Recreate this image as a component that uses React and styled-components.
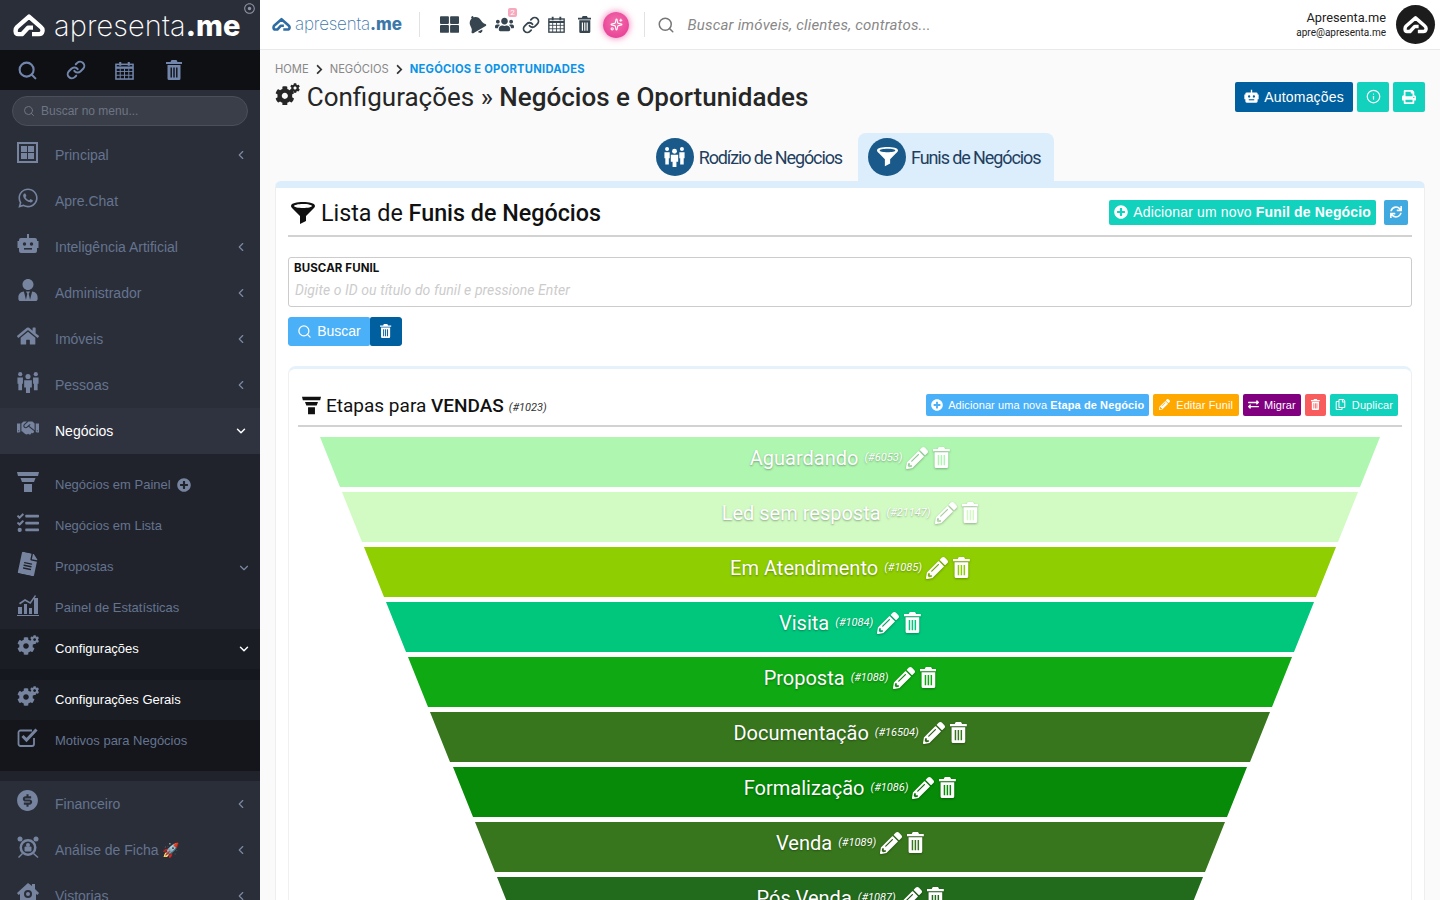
import React from 'react';
import styled, { createGlobalStyle } from 'styled-components';
import {
  FaWhatsapp, FaUserTie, FaHome, FaHandshake, FaPlusCircle, FaTasks, FaCog,
  FaBell, FaUsers, FaThLarge, FaChevronRight, FaPencilAlt, FaSync, FaExchangeAlt, FaRegCopy, FaPrint,
  FaRegDotCircle, FaFileAlt,
} from 'react-icons/fa';
import { RiMoneyDollarCircleFill } from 'react-icons/ri';
import { Search, Info, Sparkles, Link as LinkIcon, ChevronLeft, ChevronDown } from 'lucide-react';

const GlobalStyle = createGlobalStyle`
  html, body { margin: 0; padding: 0; height: 100%; overflow: hidden; }
  body { font-family: Roboto, "Liberation Sans", sans-serif; background: #fafafa; }
  * { box-sizing: border-box; }
`;

const Shell = styled.div`
  display: flex;
  width: 1440px;
  height: 900px;
  overflow: hidden;
`;

/* sidebar */
const Sidebar = styled.aside`
  width: 260px;
  flex: none;
  height: 900px;
  overflow: hidden;
  background: #2a2e39;
  font-family: "Liberation Sans", Arial, sans-serif;
`;

const SideLogo = styled.div`
  height: 50px;
  display: flex;
  align-items: center;
  padding: 0 0 0 13px;
  color: #fff;
  position: relative;
`;

const LogoText = styled.span`
  font-family: Inter, sans-serif;
  font-size: ${p => p.$size}px;
  font-weight: 200;
  letter-spacing: ${p => p.$spacing}px;
  color: ${p => p.$color};
  margin-left: ${p => p.$gap}px;
  line-height: 1;
  b { font-weight: 800; letter-spacing: 0; }
`;

const LogoDot = styled.span`
  position: absolute;
  top: 3px;
  right: 5px;
  font-size: 11px;
  color: #8d94a5;
  display: flex;
`;

const SideTools = styled.div`
  height: 40px;
  background: #0e1013;
  display: flex;
  align-items: center;
  padding-left: 17px;
  gap: 28px;
  color: #7286ad;
  svg { display: block; }
  svg:nth-child(3) { margin-left: 1px; }
  svg:last-child { margin-left: 4px; }
`;

const SideSearch = styled.div`
  margin: 6px 12px 6px;
  height: 30px;
  border-radius: 15px;
  border: 1px solid #4a4f5b;
  background: #3a3e49;
  display: flex;
  align-items: center;
  gap: 6px;
  padding-left: 10px;
  font-size: 12px;
  color: #6e7584;
`;

const MenuRow = styled.div`
  height: ${p => p.$h}px;
  display: flex;
  align-items: center;
  padding: 0 12px ${p => (p.$sub ? 2 : 0)}px 17px;
  font-size: ${p => (p.$sub ? 13 : 14)}px;
  color: ${p => (p.$on ? '#fff' : '#65748f')};
  background: ${p => p.$bg || 'transparent'};
`;

const MenuIcon = styled.span`
  width: 38px;
  flex: none;
  display: flex;
  font-size: 22px;
  color: #76849f;
  margin-top: -6px;
`;

const MenuLabel = styled.span`
  flex: 1;
  display: flex;
  align-items: center;
  gap: 6px;
`;

const Caret = styled.span`
  display: flex;
  color: ${p => (p.$on ? '#fff' : '#7c89a3')};
  margin-right: ${p => (p.$sub ? -3 : 0)}px;
  margin-top: ${p => (p.$sub ? 2 : 0)}px;
`;

const SubMenu = styled.div`
  background: #20232c;
  padding-top: 11px;
  padding-bottom: 10px;
`;

const Gap = styled.div`
  height: 11px;
  background: #16181f;
`;

/* top bar */
const Main = styled.main`
  flex: 1;
  min-width: 0;
  display: flex;
  flex-direction: column;
`;

const TopBar = styled.header`
  height: 50px;
  flex: none;
  background: #fff;
  border-bottom: 1px solid #e9e9e9;
  display: flex;
  align-items: center;
  padding: 0 5px 0 12px;
`;

const Divider = styled.span`
  width: 1px;
  height: 25px;
  background: #e2e2e2;
  margin: ${p => p.$m};
`;

const TopIcons = styled.div`
  display: flex;
  align-items: center;
  gap: 8px;
  font-size: 17px;
  color: #36454f;
  svg { display: block; }
`;

const TopIcon = styled.span`
  position: relative;
  display: flex;
  margin-left: ${p => p.$ml || 0}px;
  transform: ${p => (p.$rotate ? `rotate(${p.$rotate}deg)` : 'none')};
`;

const Badge = styled.span`
  position: absolute;
  top: -7px;
  right: -3px;
  width: 9px;
  height: 9px;
  background: #f7a8bd;
  color: #fff;
  font-size: 8px;
  line-height: 9px;
  text-align: center;
  border-radius: 2px;
`;

const Spark = styled.span`
  width: 26px;
  height: 26px;
  border-radius: 50%;
  margin-left: 4px;
  background: radial-gradient(circle at 50% 40%, #f46fae, #e5358f);
  box-shadow: 0 0 6px 1px rgba(236, 64, 150, 0.55);
  display: flex;
  align-items: center;
  justify-content: center;
  color: #fff;
`;

const TopSearch = styled.div`
  flex: 1;
  display: flex;
  align-items: center;
  gap: 12px;
  font-size: 15px;
  font-style: italic;
  letter-spacing: 0.2px;
  color: #888;
`;

const User = styled.div`
  text-align: right;
  margin-right: 10px;
  color: #222;
  font-size: 12.800px;
  line-height: 15px;
  small { display: block; font-size: 10px; line-height: 15px; }
`;

const Avatar = styled.span`
  width: 39px;
  height: 39px;
  border-radius: 50%;
  background: #1c1c1c;
  display: flex;
  align-items: center;
  justify-content: center;
`;

/* page head */
const Page = styled.div`
  flex: 1;
  padding: 0 15px;
  overflow: hidden;
`;

const Crumbs = styled.div`
  display: flex;
  align-items: center;
  gap: 5px;
  height: 38px;
  font-family: Inter, sans-serif;
  font-size: 11.200px;
  color: #888;
  span { color: #0b93e6; font-weight: 700; letter-spacing: 0.25px; }
  svg { color: #333; font-size: 11px; }
`;

const TitleRow = styled.div`
  display: flex;
  justify-content: space-between;
  align-items: flex-start;
  height: 45px;
  margin-top: -6px;
`;

const Title = styled.h1`
  margin: 0;
  font-size: 26px;
  font-weight: 400;
  line-height: 30px;
  color: #262626;
  display: flex;
  align-items: center;
  gap: 7px;
  b { font-weight: 500; }
  > span:first-child { display: flex; font-size: 24px; margin-top: -6px; }
`;

const HeadActions = styled.div`
  display: flex;
  gap: 4px;
`;

const Button = styled.span`
  height: ${p => p.$h || 30}px;
  padding: 0 ${p => p.$px ?? 5}px 1px;
  min-width: ${p => p.$w || 0}px;
  border-radius: 2px;
  background: ${p => p.$bg};
  color: #fff;
  font-family: "Liberation Sans", Arial, sans-serif;
  font-size: ${p => p.$fs || 14}px;
  letter-spacing: ${p => p.$ls || 0}px;
  display: inline-flex;
  align-items: center;
  justify-content: center;
  gap: ${p => p.$gap || 5}px;
  white-space: nowrap;
  b { font-weight: 700; }
`;

const Tabs = styled.div`
  display: flex;
  justify-content: center;
  gap: 6px;
  height: 48px;
  margin-top: 6px;
`;

const Tab = styled.div`
  padding: 5px ${p => (p.$on ? 14 : 10)}px 5px 10px;
  display: flex;
  align-items: center;
  gap: 5px;
  border-radius: 8px 8px 0 0;
  background: ${p => (p.$on ? '#dcedfb' : 'transparent')};
  color: #1f3f5f;
  font-size: 18px;
  letter-spacing: -1.100px;
`;

const TabDisc = styled.span`
  width: 38px;
  height: 38px;
  border-radius: 50%;
  background: #1a5a8a;
  color: #fff;
  display: flex;
  align-items: center;
  justify-content: center;
  margin-top: -1px;
`;

const Panel = styled.section`
  background: #fff;
  border-top: 7px solid #dcedfb;
  border-left: 1px solid #eee;
  border-right: 1px solid #eee;
  border-radius: 6px 6px 0 0;
  padding: 0 12px;
  height: 720px;
`;

const PanelHead = styled.div`
  height: 49px;
  padding: 2px 4px 0 3px;
  display: flex;
  align-items: center;
  justify-content: space-between;
  border-bottom: 2px solid #d2d2d2;
`;

const PanelTitle = styled.h2`
  margin: 0;
  font-size: 23.300px;
  font-weight: 400;
  color: #111;
  display: flex;
  align-items: center;
  gap: 6px;
  b { font-weight: 500; }
`;

const Row = styled.div`
  display: flex;
  gap: ${p => p.$gap || 0}px;
  align-items: center;
`;

const Field = styled.div`
  margin-top: 20px;
  height: 50px;
  border: 1px solid #ccc;
  border-radius: 3px;
  padding: 4px 5px;
  label {
    display: block;
    font-family: Inter, sans-serif;
    font-weight: 700;
    font-size: 11.500px;
    letter-spacing: 0.1px;
    line-height: 13px;
    color: #111;
  }
  div {
    margin-top: 7px;
    padding-left: 1px;
    font-size: 14px;
    font-style: italic;
    color: #ccc;
    letter-spacing: 0.07px;
  }
`;

const SearchGroup = styled.div`
  display: flex;
  margin-top: 10px;
  height: 29px;
  width: 114px;
  border-radius: 3px;
  overflow: hidden;
`;

const Card = styled.div`
  margin-top: 20px;
  border-top: 3px solid #e6f2fb;
  border-left: 1px solid #f0f0f0;
  border-right: 1px solid #f0f0f0;
  border-radius: 8px 8px 0 0;
  padding: 0 9px;
`;

const CardHead = styled.div`
  height: 58px;
  padding: 16px 4px 0 4px;
  display: flex;
  align-items: center;
  justify-content: space-between;
  border-bottom: 2px solid #d2d2d2;
`;

const CardTitle = styled.h3`
  margin: 0;
  font-size: 19px;
  font-weight: 400;
  color: #111;
  display: flex;
  align-items: center;
  gap: 5px;
  b { font-weight: 500; }
  i { font-size: 11px; color: #333; margin-top: 5px; }
`;

const Funnel = styled.div`
  display: flex;
  flex-direction: column;
  gap: 5px;
  align-items: center;
  margin-top: 10px;
`;

const Stage = styled.div`
  height: 50px;
  width: ${p => p.$w}px;
  flex: none;
  background: ${p => p.$bg};
  clip-path: polygon(0 0, 100% 0, calc(100% - 20px) 100%, 20px 100%);
  color: #fff;
  font-size: 20px;
  text-shadow: 0 1px 2px rgba(0, 0, 0, 0.35);
  display: flex;
  justify-content: center;
  align-items: flex-start;
  gap: 5px;
  padding-top: 8px;
  line-height: 26px;
  i { font-size: 11px; margin: 0 -1px 0 1px; }
  svg { margin-top: 2px; filter: drop-shadow(0 1px 1px rgba(0, 0, 0, 0.3)); }
`;

const Gears = styled.span`
  display: inline-flex;
  align-items: flex-start;
  svg:first-child { font-size: 0.82em; margin-top: 0.16em; }
  svg:last-child { font-size: 0.42em; margin-left: -0.5em; }
`;

function GearPair() {
  return <Gears><FaCog /><FaCog /></Gears>;
}

function LogoMark({ size = 32, color = '#fff' }) {
  return (
    <svg width={size} height={size * 0.76} viewBox="0 0 32 24" fill="none" stroke={color} strokeWidth="4.4" strokeLinejoin="round">
      <path d="M19 21H26C30 21 30.500 16 28 14L16 3.500L4 14C2 16 2 21 5 21H9L15 14.500H20" />
    </svg>
  );
}

function PrincipalIcon() {
  return (
    <svg width="21" height="21" viewBox="0 0 21 21" fill="#76849f">
      <path fillRule="evenodd" d="M0 0h21v21H0zM2 2v17h17V2z" />
      <path d="M4 4h6v6H4zM11 4h6v6h-6zM4 11h6v6H4zM11 11h6v6h-6z" />
    </svg>
  );
}

function FunnelIcon({ size = 24, color = '#111' }) {
  return (
    <svg width={size} height={size} viewBox="0 0 24 24">
      <path fill={color} fillRule="evenodd" d="M12 1C6 1 0 2 0 5c0 1 1 2 2 3l7 7v8l6-3v-5l7-7c1-1 2-2 2-3 0-3-6-4-12-4zm0 2c5 0 9 1 9 2s-4 2-9 2-9-1-9-2 4-2 9-2z" />
    </svg>
  );
}

function StackedFunnel({ size = 22, color = '#76849f' }) {
  return (
    <svg width={size} height={size} viewBox="0 0 22 22" fill={color}>
      <path d="M0 1h22l-1 4H1zM3.500 7h15l-1.500 4H5zM7 13h8v8H7z" />
    </svg>
  );
}

function PeopleIcon({ size = 22, color = '#76849f' }) {
  return (
    <svg width={size} height={size} viewBox="0 0 24 24" fill={color}>
      <circle cx="3.500" cy="3.500" r="2.300" />
      <path d="M0.500 7h6v7h-1v7h-4v-7h-1z" />
      <circle cx="20.500" cy="3.500" r="2.300" />
      <path d="M17.500 7h6v7h-1v7h-4v-7h-1z" />
      <circle cx="12" cy="6" r="2.800" />
      <path d="M7.800 10h8.400v8h-2v6h-4.400v-6h-2z" />
    </svg>
  );
}

function RobotIcon({ size = 22, color = '#76849f', eye = '#2a2e39' }) {
  return (
    <svg width={size} height={size} viewBox="0 0 22 22">
      <path fill={color} d="M10 1h2v4h6a2 2 0 0 1 2 2v1h1.500v7H20v3a2 2 0 0 1-2 2H4a2 2 0 0 1-2-2v-3H.5V8H2V7a2 2 0 0 1 2-2h6z" />
      <circle cx="7.500" cy="11" r="1.700" fill={eye} />
      <circle cx="14.500" cy="11" r="1.700" fill={eye} />
      <rect x="7" y="15" width="8" height="1.600" fill={eye} />
    </svg>
  );
}

function TrashIcon({ size = 20, color = 'currentColor', cut = '#0e1013' }) {
  return (
    <svg width={size * 0.8} height={size} viewBox="0 0 16 20">
      <path fill={color} d="M5.500 0h5l1 2H16v2H0V2h4.500zM1.500 5h13v13.500a1.500 1.500 0 0 1-1.500 1.500H3a1.500 1.500 0 0 1-1.500-1.500z" />
      <path fill={cut} d="M4.500 7.500h1.400v10H4.500zM7.300 7.500h1.400v10H7.300zM10.100 7.500h1.400v10h-1.400z" />
    </svg>
  );
}

function CalendarIcon({ size = 20, color = 'currentColor' }) {
  return (
    <svg width={size} height={size} viewBox="0 0 20 20" fill="none" stroke={color}>
      <rect x="1" y="3.500" width="18" height="15.500" strokeWidth="1.600" />
      <path d="M1 7h18" strokeWidth="2.500" />
      <path d="M1 11h18M1 15h18M5.500 8v11M10 8v11M14.500 8v11" strokeWidth="1" />
      <path d="M5.500 1v4M14.500 1v4" strokeWidth="2.200" />
    </svg>
  );
}

function StatsIcon() {
  return (
    <svg width="22" height="22" viewBox="0 0 22 22" fill="#76849f">
      <path d="M0 21h22v1H0zM1 13h4v7H1zM7 10h3v10H7zM12 14h3v6h-3zM17 4h4v16h-4z" />
      <path d="M2 9l6-4 5 3 5-7 1 1-5.500 8L8 7l-5 3.500z" />
    </svg>
  );
}

function CheckIcon() {
  return (
    <svg width="21" height="21" viewBox="0 0 21 21" fill="none" stroke="#76849f">
      <path d="M17 11v6a2 2 0 0 1-2 2H3.500a2 2 0 0 1-2-2V5.500a2 2 0 0 1 2-2H15" strokeWidth="1.800" />
      <path d="M5.500 9l4 4L19.500 2.500" strokeWidth="3" />
    </svg>
  );
}

function AlarmLockIcon() {
  return (
    <svg width="22" height="22" viewBox="0 0 22 22" fill="#76849f">
      <circle cx="3" cy="3" r="2.500" />
      <circle cx="19" cy="3" r="2.500" />
      <path fillRule="evenodd" d="M11 3a8.500 8.500 0 1 1 0 17 8.500 8.500 0 0 1 0-17zm0 2.500a6 6 0 1 0 0 12 6 6 0 0 0 0-12z" />
      <circle cx="11" cy="9" r="2" />
      <rect x="7.500" y="10.500" width="7" height="5" rx="1" />
      <path d="M17 17l4.500 4-1 1-4.500-4zM5 17l-4 4 1 1 4-4z" />
    </svg>
  );
}

function HouseSearchIcon() {
  return (
    <svg width="22" height="22" viewBox="0 0 22 22" fill="#76849f">
      <path fillRule="evenodd" d="M11 1l4 3V2h3v5l4 4-1.500 2L19 12v9H3v-9l-1.500 1L0 11zm0 7a4 4 0 1 0 0 8 4 4 0 0 0 0-8zm0 2a2 2 0 1 1 0 4 2 2 0 0 1 0-4z" />
    </svg>
  );
}

const menuTop = [
  { label: 'Principal', icon: <PrincipalIcon />, caret: true },
  { label: 'Apre.Chat', icon: <FaWhatsapp /> },
  { label: 'Inteligência Artificial', icon: <RobotIcon />, caret: true },
  { label: 'Administrador', icon: <FaUserTie />, caret: true },
  { label: 'Imóveis', icon: <FaHome />, caret: true },
  { label: 'Pessoas', icon: <PeopleIcon />, caret: true },
];

const menuBottom = [
  { label: 'Financeiro', icon: <RiMoneyDollarCircleFill size={25} style={{ margin: '-2px 0 0 -2px' }} />, caret: true },
  { label: 'Análise de Ficha 🚀', icon: <AlarmLockIcon />, caret: true },
  { label: 'Vistorias', icon: <HouseSearchIcon />, caret: true },
];

const stages = [
  { name: 'Aguardando', id: 6053, w: 1060, bg: '#aff7b0' },
  { name: 'Led sem resposta', id: 21147, w: 1016, bg: '#d1fbc3' },
  { name: 'Em Atendimento', id: 1085, w: 972, bg: '#8fce00' },
  { name: 'Visita', id: 1084, w: 928, bg: '#00c77c' },
  { name: 'Proposta', id: 1088, w: 884, bg: '#0fa913' },
  { name: 'Documentação', id: 16504, w: 840, bg: '#38761d' },
  { name: 'Formalização', id: 1086, w: 794, bg: '#078a07' },
  { name: 'Venda', id: 1089, w: 750, bg: '#38761d' },
  { name: 'Pós Venda', id: 1087, w: 706, bg: '#226b1c' },
];

const TopMenuItem = ({ item }) => (
  <MenuRow $h={46}>
    <MenuIcon>{item.icon}</MenuIcon>
    <MenuLabel>{item.label}</MenuLabel>
    {item.caret && <Caret><ChevronLeft size={14} /></Caret>}
  </MenuRow>
);

export default function App() {
  return (
    <Shell>
      <GlobalStyle />
      <Sidebar>
        <SideLogo>
          <LogoMark />
          <LogoText $size={29} $spacing={0.1} $color="#fff" $gap={9}>apresenta<b>.me</b></LogoText>
          <LogoDot><FaRegDotCircle /></LogoDot>
        </SideLogo>
        <SideTools>
          <Search size={21} strokeWidth={2.4} />
          <LinkIcon size={20} strokeWidth={2.4} />
          <CalendarIcon size={19} />
          <TrashIcon size={20} />
        </SideTools>
        <SideSearch>
          <Search size={12} />
          Buscar no menu...
        </SideSearch>
        {menuTop.map(item => <TopMenuItem key={item.label} item={item} />)}
        <MenuRow $h={46} $on $bg="#2f333f">
          <MenuIcon><FaHandshake /></MenuIcon>
          <MenuLabel>Negócios</MenuLabel>
          <Caret $on><ChevronDown size={14} strokeWidth={2.5} /></Caret>
        </MenuRow>
        <SubMenu>
          <MenuRow $h={41} $sub>
            <MenuIcon><StackedFunnel /></MenuIcon>
            <MenuLabel>Negócios em Painel <FaPlusCircle size={14} color="#76849f" /></MenuLabel>
          </MenuRow>
          <MenuRow $h={41} $sub>
            <MenuIcon><FaTasks /></MenuIcon>
            <MenuLabel>Negócios em Lista</MenuLabel>
          </MenuRow>
          <MenuRow $h={41} $sub>
            <MenuIcon><FaFileAlt style={{ transform: 'rotate(12deg)' }} /></MenuIcon>
            <MenuLabel>Propostas</MenuLabel>
            <Caret $sub><ChevronDown size={14} /></Caret>
          </MenuRow>
          <MenuRow $h={41} $sub>
            <MenuIcon><StatsIcon /></MenuIcon>
            <MenuLabel>Painel de Estatísticas</MenuLabel>
          </MenuRow>
          <MenuRow $h={40} $sub $on $bg="#1a1d24">
            <MenuIcon><GearPair /></MenuIcon>
            <MenuLabel>Configurações</MenuLabel>
            <Caret $sub $on><ChevronDown size={14} strokeWidth={2.5} /></Caret>
          </MenuRow>
          <Gap />
          <MenuRow $h={40} $sub $on $bg="#1a1d24">
            <MenuIcon><GearPair /></MenuIcon>
            <MenuLabel>Configurações Gerais</MenuLabel>
          </MenuRow>
          <MenuRow $h={51} $sub $bg="#14161c" style={{ paddingBottom: 10 }}>
            <MenuIcon><CheckIcon /></MenuIcon>
            <MenuLabel>Motivos para Negócios</MenuLabel>
          </MenuRow>
        </SubMenu>
        {menuBottom.map(item => <TopMenuItem key={item.label} item={item} />)}
      </Sidebar>

      <Main>
        <TopBar>
          <LogoMark size={19} color="#2e6da4" />
          <LogoText $size={17} $spacing={-0.2} $color="#3d77aa" $gap={4}>apresenta<b>.me</b></LogoText>
          <Divider $m="0 20px 0 17px" />
          <TopIcons>
            <FaThLarge size={19} />
            <TopIcon $rotate={-30}><FaBell size={19} /></TopIcon>
            <TopIcon $ml={1}><FaUsers size={19} /><Badge>2</Badge></TopIcon>
            <LinkIcon size={18} strokeWidth={2.4} />
            <CalendarIcon size={17} />
            <TopIcon $ml={5}><TrashIcon size={17} cut="#fff" /></TopIcon>
            <Spark><Sparkles size={13} /></Spark>
          </TopIcons>
          <Divider $m="0 12px 0 15px" />
          <TopSearch>
            <Search size={18} color="#777" style={{ flex: 'none' }} />
            Buscar imóveis, clientes, contratos...
          </TopSearch>
          <User>
            Apresenta.me
            <small>apre@apresenta.me</small>
          </User>
          <Avatar><LogoMark size={25} /></Avatar>
        </TopBar>

        <Page>
          <Crumbs>
            HOME <FaChevronRight /> NEGÓCIOS <FaChevronRight /> <span>NEGÓCIOS E OPORTUNIDADES</span>
          </Crumbs>
          <TitleRow>
            <Title>
              <span><GearPair /></span>
              <span>Configurações » <b>Negócios e Oportunidades</b></span>
            </Title>
            <HeadActions>
              <Button $bg="#005f9e" $px={9} $ls={0.2}><RobotIcon size={15} color="#fff" eye="#005f9e" /> Automações</Button>
              <Button $bg="#12d1bd" $w={32}><Info size={15} /></Button>
              <Button $bg="#12d1bd" $w={32}><FaPrint size={14} /></Button>
            </HeadActions>
          </TitleRow>

          <Tabs>
            <Tab>
              <TabDisc><PeopleIcon size={21} color="#fff" /></TabDisc>
              Rodízio de Negócios
            </Tab>
            <Tab $on>
              <TabDisc><FunnelIcon size={21} color="#fff" /></TabDisc>
              Funis de Negócios
            </Tab>
          </Tabs>

          <Panel>
            <PanelHead>
              <PanelTitle>
                <FunnelIcon />
                <span>Lista de <b>Funis de Negócios</b></span>
              </PanelTitle>
              <Row $gap={8}>
                <Button $bg="#12d1bd" $h={25} $px={5} $ls={0.15}>
                  <FaPlusCircle size={14} />
                  <span>Adicionar um novo <b>Funil de Negócio</b></span>
                </Button>
                <Button $bg="#3fa9e0" $h={25} $w={24}><FaSync size={12} /></Button>
              </Row>
            </PanelHead>
            <Field>
              <label>BUSCAR FUNIL</label>
              <div>Digite o ID ou título do funil e pressione Enter</div>
            </Field>
            <SearchGroup>
              <Button $bg="#4ab0f7" $h={29} $w={82}><Search size={15} /> Buscar</Button>
              <Button $bg="#005f9e" $h={29} $w={32}><TrashIcon size={14} color="#fff" cut="#005f9e" /></Button>
            </SearchGroup>
            <Card>
              <CardHead>
                <CardTitle>
                  <StackedFunnel size={19} color="#111" />
                  <span>Etapas para <b>VENDAS</b></span>
                  <i>(#1023)</i>
                </CardTitle>
                <Row $gap={4}>
                  <Button $bg="#4ab0f7" $h={22} $fs={11} $ls={0.1}>
                    <FaPlusCircle size={12} />
                    <span>Adicionar uma nova <b>Etapa de Negócio</b></span>
                  </Button>
                  <Button $bg="#ffa800" $h={22} $fs={11} $ls={0.1} $px={6} $gap={6}><FaPencilAlt size={11} /> Editar Funil</Button>
                  <Button $bg="#800080" $h={22} $fs={11} $ls={0.1}><FaExchangeAlt size={11} /> Migrar</Button>
                  <Button $bg="#f85c5c" $h={22} $fs={11} $w={21}><TrashIcon size={11} color="#fff" cut="#f85c5c" /></Button>
                  <Button $bg="#12d1bd" $h={22} $fs={11} $ls={0.1} $gap={6}><FaRegCopy size={11} /> Duplicar</Button>
                </Row>
              </CardHead>
              <Funnel>
                {stages.map(stage => (
                  <Stage key={stage.id} $w={stage.w} $bg={stage.bg}>
                    {stage.name} <i>(#{stage.id})</i>
                    <FaPencilAlt size={22} />
                    <TrashIcon size={21} color="#fff" cut={stage.bg} />
                  </Stage>
                ))}
              </Funnel>
            </Card>
          </Panel>
        </Page>
      </Main>
    </Shell>
  );
}
